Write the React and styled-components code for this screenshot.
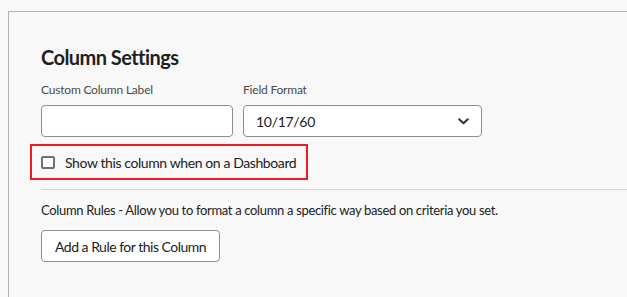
import React, { useState } from 'react';
import styled, { createGlobalStyle } from 'styled-components';

const GlobalStyle = createGlobalStyle`
    html, body {
        margin: 0;
        padding: 0;
        background: #f8f8f8;
    }
    body {
        font-family: Lato, "Liberation Sans", sans-serif;
        color: #222;
        overflow: hidden;
    }
`;

const Page = styled.div`
    padding: 11px 0 0 8px;
    height: 297px;
    box-sizing: border-box;
`;

const Panel = styled.section`
    border-top: 1px solid #b1b1b1;
    border-left: 1px solid #b1b1b1;
    height: 100%;
    box-sizing: border-box;
    padding: 33px 0 0 32px;
`;

const Title = styled.h2`
    margin: 0;
    font-size: 20px;
    font-weight: 700;
    line-height: 24px;
    letter-spacing: -0.55px;
    color: #1f1f1f;
`;

const Fields = styled.div`
    display: flex;
    gap: 10px;
    margin-top: 13px;
`;

const Field = styled.div`
    display: flex;
    flex-direction: column;
    width: ${p => p.$width}px;
    label {
        font-size: 12px;
        line-height: 15px;
        letter-spacing: -0.2px;
        color: #4a4a4a;
        margin-bottom: 8px;
    }
`;

const TextInput = styled.input`
    box-sizing: border-box;
    height: 32px;
    width: 100%;
    border: 1px solid #8f8f8f;
    border-radius: 4px;
    background: #fff;
    font: inherit;
    font-size: 14px;
    padding: 0 12px;
    outline: none;
`;

const Select = styled.div`
    box-sizing: border-box;
    height: 32px;
    display: flex;
    align-items: center;
    justify-content: space-between;
    border: 1px solid #8f8f8f;
    border-radius: 4px;
    background: #fff;
    padding: 0 12px 0 12px;
    font-size: 14px;
    letter-spacing: -0.3px;
    color: #222;
`;

const Highlight = styled.div`
    display: flex;
    width: fit-content;
    align-items: center;
    gap: 10px;
    margin: 7px 0 0 -11px;
    padding: 0 10px 0 9px;
    height: 36px;
    box-sizing: border-box;
    border: 2px solid #ec1c24;
    font-size: 14px;
    letter-spacing: -0.4px;
    color: #222;
`;

const Check = styled.span`
    width: 14px;
    height: 13px;
    box-sizing: border-box;
    border: 2px solid #707070;
    border-radius: 2px;
    background: ${p => (p.$on ? '#707070' : '#fff')};
    cursor: pointer;
`;

const Divider = styled.hr`
    border: none;
    border-top: 1px solid #d5d5d5;
    margin: 9px 0 0 0;
`;

const RulesText = styled.p`
    margin: 12px 0 0 0;
    font-size: 13px;
    line-height: 16px;
    letter-spacing: -0.33px;
    color: #222;
`;

const Button = styled.button`
    display: block;
    margin-top: 12px;
    height: 32px;
    padding: 0 13px;
    border: 1px solid #8f8f8f;
    border-radius: 4px;
    background: #fff;
    font: inherit;
    font-size: 14px;
    letter-spacing: -0.5px;
    color: #222;
    cursor: pointer;
`;

const App = () => {
    const [checked, setChecked] = useState(false);

    return (
        <Page>
            <GlobalStyle />
            <Panel>
                <Title>Column Settings</Title>
                <Fields>
                    <Field $width={192}>
                        <label htmlFor="custom-label">Custom Column Label</label>
                        <TextInput id="custom-label" type="text" />
                    </Field>
                    <Field $width={239}>
                        <label>Field Format</label>
                        <Select>
                            <span>10/17/60</span>
                            <svg width="11" height="7" viewBox="0 0 11 7">
                                <path d="M1.2 1.2 L5.5 5.3 L9.8 1.2" fill="none" stroke="#333" strokeWidth="2" strokeLinecap="round" strokeLinejoin="round" />
                            </svg>
                        </Select>
                    </Field>
                </Fields>
                <Highlight>
                    <Check $on={checked} onClick={() => setChecked(c => !c)} />
                    <span>Show this column when on a Dashboard</span>
                </Highlight>
                <Divider />
                <RulesText>Column Rules - Allow you to format a column a specific way based on criteria you set.</RulesText>
                <Button type="button">Add a Rule for this Column</Button>
            </Panel>
        </Page>
    );
};

export default App;
